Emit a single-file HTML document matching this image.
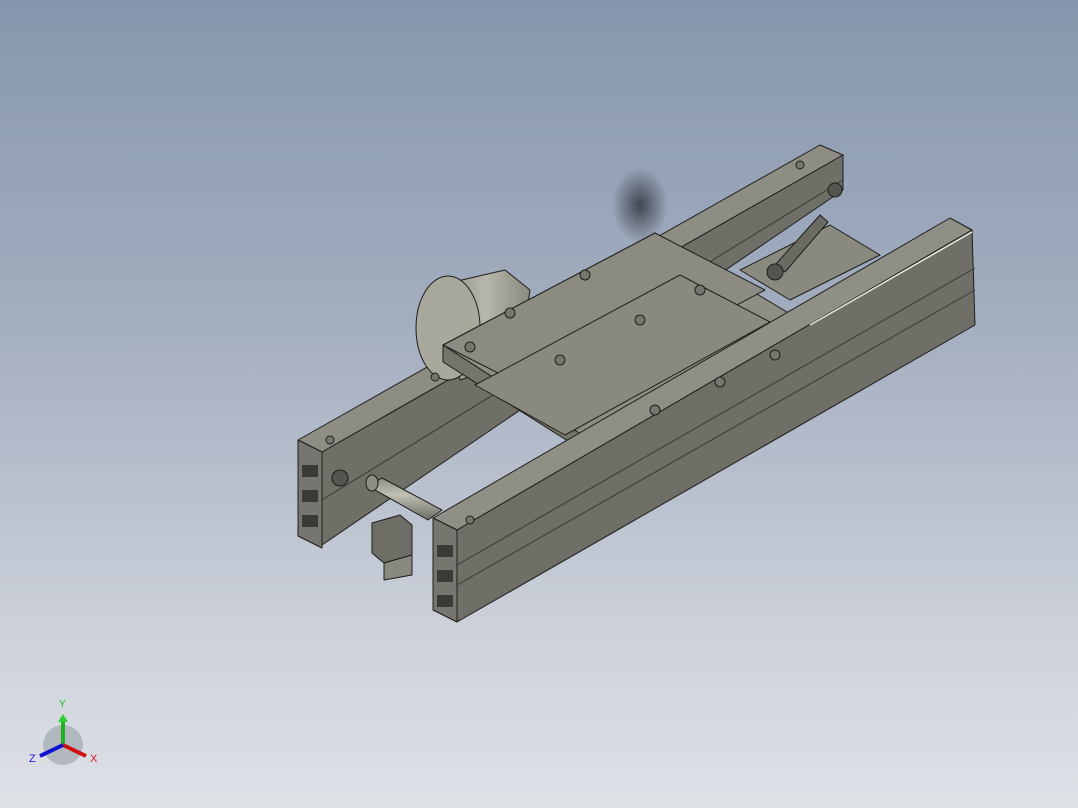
<!DOCTYPE html>
<html><head><style>
html,body{margin:0;padding:0;width:1078px;height:808px;overflow:hidden}
body{background:linear-gradient(180deg,#8796ac 0%,#a3aec0 40%,#c9ced8 75%,#dfe2e7 100%)}
svg{position:absolute;left:0;top:0}
</style></head><body>
<svg width="1078" height="808" viewBox="0 0 1078 808">
<defs>
<radialGradient id="sh" cx="0.5" cy="0.5" r="0.5"><stop offset="0" stop-color="#2a2f38" stop-opacity="0.8"/><stop offset="1" stop-color="#2a2f38" stop-opacity="0"/></radialGradient>
<linearGradient id="cyl" x1="0" y1="0" x2="1" y2="0"><stop offset="0" stop-color="#8a897f"/><stop offset="0.5" stop-color="#b8b7aa"/><stop offset="1" stop-color="#8a897f"/></linearGradient>
<linearGradient id="cyl2" x1="0" y1="0" x2="0" y2="1"><stop offset="0" stop-color="#8f8e84"/><stop offset="0.4" stop-color="#c0bfb2"/><stop offset="1" stop-color="#6e6d66"/></linearGradient>
</defs>
<ellipse cx="640" cy="205" rx="28" ry="38" fill="url(#sh)"/>
<g stroke="#1e1e1c" stroke-width="1" stroke-linejoin="round">
<!-- back rail -->
<polygon points="298,440 820,145 843,155 322,452" fill="#8e8d84"/>
<polygon points="322,452 843,155 843,190 322,545" fill="#6f6e67"/>
<polygon points="298,440 322,452 322,548 298,536" fill="#767570"/>
<line x1="322" y1="500" x2="843" y2="180" stroke="#3a3a36"/>
<!-- rear cross roller & belt arm -->
<polygon points="740,270 830,225 880,255 790,300" fill="#8a897f"/>
<polygon points="775,265 820,215 828,222 785,272" fill="#6a6962"/>
<!-- motor -->
<polygon points="440,285 505,270 530,290 520,360 460,380" fill="url(#cyl)"/>
<ellipse cx="448" cy="328" rx="32" ry="52" fill="#a9a89c"/>
<!-- carriage -->
<polygon points="443,345 655,233 797,318 590,440" fill="#8f8e84"/>
<polygon points="443,345 590,440 590,455 443,362" fill="#75746c"/>
<polygon points="590,440 797,318 797,333 590,455" fill="#6c6b64"/>
<polygon points="443,345 655,233 765,290 555,402" fill="#8c8b81"/>
<polygon points="475,385 680,275 770,322 565,435" fill="#8a897f"/>
<!-- front cross roller -->
<polygon points="368,486 382,478 442,510 428,520" fill="url(#cyl2)"/>
<ellipse cx="372" cy="483" rx="6" ry="8" fill="#8f8e84"/>
<!-- switch -->
<polygon points="372,523 400,515 412,525 412,555 384,563 372,553" fill="#6e6d66"/>
<polygon points="384,563 412,555 412,575 384,580" fill="#8a897f"/>
<!-- front rail -->
<polygon points="433,518 950,218 972,230 457,530" fill="#908f86"/>
<polygon points="457,530 972,230 975,325 457,622" fill="#6f6e67"/>
<polygon points="433,518 457,530 457,622 433,610" fill="#767570"/>
<line x1="457" y1="565" x2="975" y2="268" stroke="#3a3a36"/>
<line x1="457" y1="585" x2="975" y2="290" stroke="#3a3a36"/>
<line x1="810" y1="325" x2="972" y2="232" stroke="#e8e8e0" stroke-width="1.5"/>
</g>
<g fill="#77766e" stroke="#1e1e1c">
<circle cx="510" cy="313" r="5"/><circle cx="585" cy="275" r="5"/><circle cx="470" cy="347" r="5"/>
<circle cx="640" cy="320" r="5"/><circle cx="700" cy="290" r="5"/><circle cx="560" cy="360" r="5"/>
<circle cx="720" cy="382" r="5"/><circle cx="655" cy="410" r="5"/><circle cx="775" cy="355" r="5"/>
<circle cx="800" cy="165" r="4"/><circle cx="435" cy="377" r="4"/><circle cx="470" cy="520" r="4"/><circle cx="330" cy="440" r="4"/>
<circle cx="340" cy="478" r="8" fill="#55544e"/><circle cx="835" cy="190" r="7" fill="#55544e"/><circle cx="775" cy="272" r="8" fill="#55544e"/>
</g>
<g fill="#3a3a36">
<rect x="302" y="465" width="16" height="12"/><rect x="302" y="490" width="16" height="12"/><rect x="302" y="515" width="16" height="12"/>
<rect x="437" y="545" width="16" height="12"/><rect x="437" y="570" width="16" height="12"/><rect x="437" y="595" width="16" height="12"/>
</g>
<!-- triad -->
<g>
<circle cx="63" cy="745" r="20" fill="#9aa0a8" opacity="0.6"/>
<line x1="63" y1="745" x2="63" y2="720" stroke="#20b020" stroke-width="4"/>
<polygon points="58,722 68,722 63,714" fill="#30d030"/>
<line x1="63" y1="745" x2="86" y2="756" stroke="#d01010" stroke-width="4"/>
<line x1="63" y1="745" x2="40" y2="756" stroke="#1010d0" stroke-width="4"/>
<text x="59" y="707" font-family="Liberation Sans,sans-serif" font-size="10" fill="#20c020">Y</text>
<text x="90" y="762" font-family="Liberation Sans,sans-serif" font-size="11" fill="#e02020">X</text>
<text x="29" y="762" font-family="Liberation Sans,sans-serif" font-size="11" fill="#2020e0">Z</text>
</g>
</svg>
</body></html>
